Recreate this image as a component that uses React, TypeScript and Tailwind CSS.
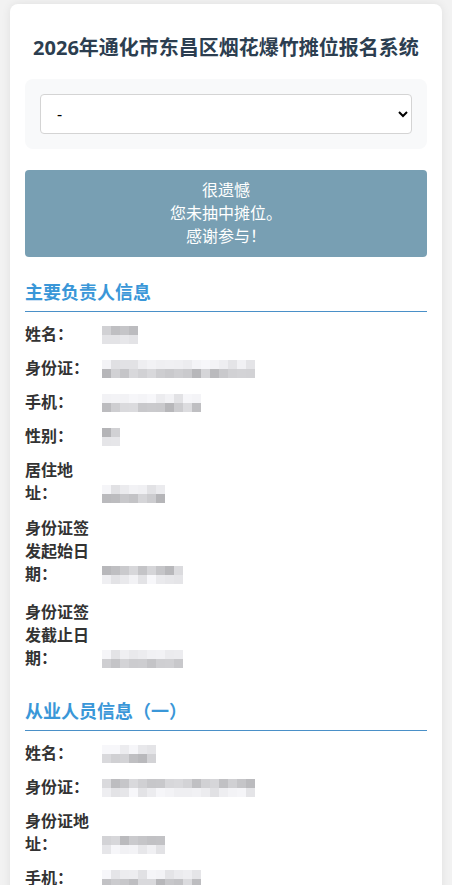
import React from "react";

type Row = {
  label: string;
  cols: number;
  dark: "top" | "bottom";
  mb?: string;
};

// cheap seeded noise so the mosaics look the same every run
const shade = (seed: number, dark: boolean) => {
  const n = Math.abs(Math.sin(seed * 12.9898) * 43758.5453) % 1;
  const v = dark ? Math.round(180 + n * 40) : Math.round(224 + n * 24);
  return `rgb(${v},${v},${Math.min(255, v + 3)})`;
};

const Mosaic = ({ cols, dark, seed }: { cols: number; dark: "top" | "bottom"; seed: number }) => (
  <div className="flex flex-col">
    {[0, 1].map((r) => (
      <div key={r} className="flex">
        {Array.from({ length: cols }).map((_, c) => (
          <div
            key={c}
            className="h-[9px] w-[9px]"
            style={{ background: shade(seed * 31 + r * 17 + c, (r === 0) === (dark === "top")) }}
          />
        ))}
      </div>
    ))}
  </div>
);

const InfoRow = ({ row, seed }: { row: Row; seed: number }) => (
  <div className={`flex items-end ${row.mb ?? "mb-[11px]"}`}>
    <div className="w-[70px] shrink-0 text-[16px] leading-[23px] font-bold text-[#333]">{row.label}</div>
    <div className="ml-[7px] mb-[2px]">
      <Mosaic cols={row.cols} dark={row.dark} seed={seed} />
    </div>
  </div>
);

const SectionTitle = ({ text, mt }: { text: string; mt: string }) => (
  <h2 className={`${mt} mb-[11px] border-b border-[#4a90c8] pb-[6px] text-[18px] leading-[25px] font-bold text-[#3a97d8]`}>
    {text}
  </h2>
);

const leader: Row[] = [
  { label: "姓名：", cols: 4, dark: "top" },
  { label: "身份证：", cols: 17, dark: "bottom" },
  { label: "手机：", cols: 11, dark: "bottom" },
  { label: "性别：", cols: 2, dark: "top" },
  { label: "居住地址：", cols: 7, dark: "bottom", mb: "mb-[12px]" },
  { label: "身份证签发起始日期：", cols: 9, dark: "top", mb: "mb-[15px]" },
  { label: "身份证签发截止日期：", cols: 9, dark: "bottom" },
];

const staff: Row[] = [
  { label: "姓名：", cols: 6, dark: "bottom" },
  { label: "身份证：", cols: 17, dark: "top" },
  { label: "身份证地址：", cols: 7, dark: "top" },
  { label: "手机：", cols: 11, dark: "bottom" },
];

export default function App() {
  return (
    <div className="min-h-screen bg-[#f2f2f2] pt-[4px] font-['Noto_Sans','Noto_Sans_CJK_SC',sans-serif]">
      <div className="mx-[10px] rounded-lg bg-white px-[15px] pt-[30px] pb-[30px] shadow-[0_0_10px_rgba(0,0,0,0.08)]">
        <h1 className="mb-[17px] text-center text-[20px] leading-[28px] font-bold text-[#2c3e50]">
          2026年通化市东昌区烟花爆竹摊位报名系统
        </h1>

        <div className="rounded-lg bg-[#f8f9fa] p-[15px]">
          <select className="h-[40px] w-full rounded border border-[#d4d4d4] bg-white px-[12px] text-[16px] text-black">
            <option>-</option>
          </select>
        </div>

        <div className="mt-[21px] rounded bg-[#789fb3] py-[9px] text-center text-[16px] leading-[23px] text-white">
          <div>很遗憾</div>
          <div>您未抽中摊位。</div>
          <div>感谢参与！</div>
        </div>

        <SectionTitle text="主要负责人信息" mt="mt-[23px]" />
        {leader.map((r, i) => (
          <InfoRow key={i} row={r} seed={i + 1} />
        ))}

        <SectionTitle text="从业人员信息（一）" mt="mt-[29px]" />
        {staff.map((r, i) => (
          <InfoRow key={i} row={r} seed={i + 20} />
        ))}
      </div>
    </div>
  );
}
